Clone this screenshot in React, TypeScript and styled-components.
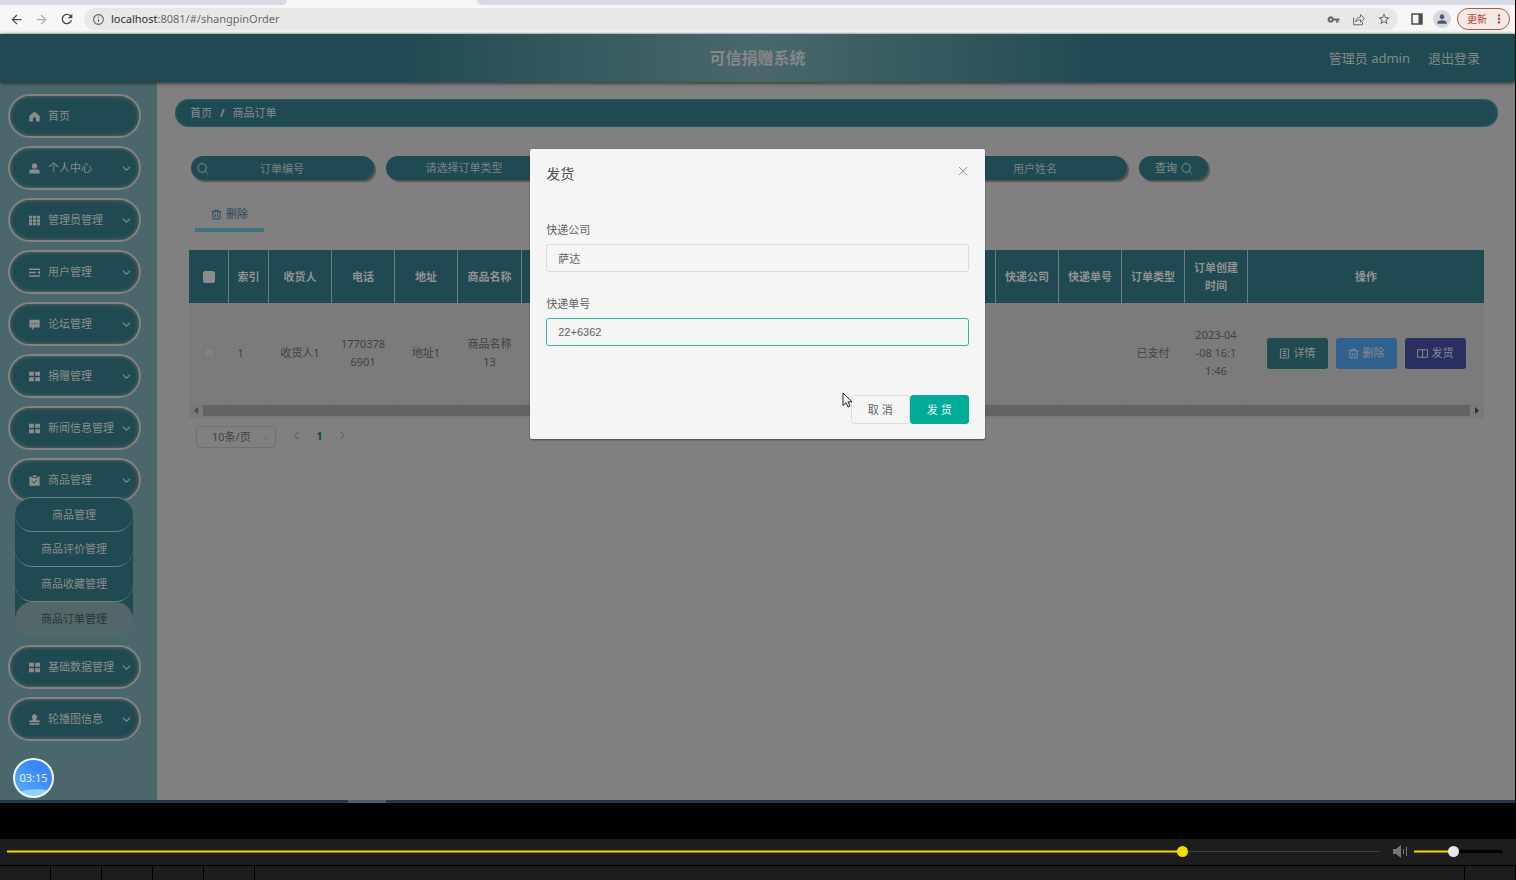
import React, { useState } from 'react';
import styled, { createGlobalStyle, css } from 'styled-components';
import {
  MdArrowBack,
  MdArrowForward,
  MdRefresh,
  MdInfoOutline,
  MdVpnKey,
  MdStarBorder,
  MdPerson,
  MdMoreVert,
} from 'react-icons/md';

const teal = '#1f4a51';
const tealSoft = '#4a686b';
const ink = '#8c8c8c';
const page = '#808080';
const uiFont = '"Noto Sans", "Noto Sans CJK SC", sans-serif';
const formFont = '"Liberation Sans", "Noto Sans CJK SC", sans-serif';

const GlobalStyle = createGlobalStyle`
  * { box-sizing: border-box; }
  body { margin: 0; background: #000; font: 11px/18px ${uiFont}; color: #404244; }
  button, input, select { font: inherit; color: inherit; margin: 0; }
  button { cursor: pointer; padding: 0; border: 0; background: none; }
  a { color: inherit; text-decoration: none; }
  ul { list-style: none; margin: 0; padding: 0; }
  svg { display: block; flex: none; }
`;

const Player = styled.div`
  display: flex;
  flex-direction: column;
  min-height: 100vh;
`;

const Screen = styled.div`
  position: relative;
  flex: 1;
  display: flex;
  flex-direction: column;
  margin-right: 1px;
  background: ${page};
`;

/* Browser chrome */

const TabStrip = styled.div`
  display: flex;
  height: 5px;
  background: #f7f7f7;
`;

const TabEdge = styled.div<{ $side: 'left' | 'right' }>`
  background: #d8dae1;
  ${(p) =>
    p.$side === 'left'
      ? css`width: 287px; border-bottom-right-radius: 5px;`
      : css`flex: 1; margin-left: 190px; border-bottom-left-radius: 5px;`}
`;

const BrowserBar = styled.div`
  display: flex;
  align-items: center;
  height: 29px;
  padding: 0 5px 0 9px;
  background: #f7f7f7;
  border-bottom: 1px solid #e6eaea;
  color: #4b4d50;
`;

const NavButton = styled.button<{ $faded?: boolean }>`
  width: 25px;
  height: 22px;
  color: ${(p) => (p.$faded ? '#b0b0b0' : '#4b4d50')};
`;

const Omnibox = styled.div`
  flex: 1;
  display: flex;
  align-items: center;
  height: 22px;
  padding: 0 8px;
  border-radius: 11px;
  background: #e8e8e8;
  color: #66686b;
`;

const Url = styled.span`
  flex: 1;
  margin-left: 6px;
  b { font-weight: 400; color: #2c2e30; }
`;

const OmniButton = styled.button`
  width: 13px;
  height: 14px;
  margin-left: 12px;
  display: grid;
  place-items: center;
`;

const Avatar = styled.button`
  display: grid;
  place-items: center;
  width: 18px;
  height: 18px;
  margin: 0 6px 0 10px;
  border-radius: 9px;
  background: #d5d7dc;
  color: #4a5a74;
`;

const UpdateButton = styled.button`
  display: flex;
  align-items: center;
  justify-content: space-between;
  width: 53px;
  height: 22px;
  padding: 0 3px 0 9px;
  border: 1px solid #c0563f;
  border-radius: 11px;
  background: #f3e9e6;
  color: #c03a28;
  font-size: 10px;
`;

/* Application shell */

const Header = styled.header`
  position: relative;
  z-index: 1;
  display: grid;
  grid-template-columns: 1fr auto 1fr;
  align-items: center;
  height: 48px;
  padding: 0 35px;
  color: #868888;
  font-size: 13px;
  background: linear-gradient(90deg, ${teal} 26%, ${tealSoft} 50%, ${teal} 73%);
  box-shadow: 0 1px 4px #222;
`;

const AppTitle = styled.h1`
  grid-column: 2;
  margin: 0;
  font-size: 16px;
  line-height: 24px;
`;

const Account = styled.div`
  display: flex;
  justify-content: flex-end;
  gap: 18px;
`;

const Body = styled.div`
  flex: 1;
  display: flex;
`;

const Sidebar = styled.nav`
  width: 157px;
  padding: 12px 16px 58px 8px;
  background: ${tealSoft};
`;

const MenuList = styled.ul`
  display: flex;
  flex-direction: column;
  gap: 8px;
`;

const MenuButton = styled.button`
  display: flex;
  align-items: center;
  width: 100%;
  height: 44px;
  padding: 0 8px 0 19px;
  border: 2px solid #858282;
  border-radius: 22px;
  background: ${teal};
  box-shadow: inset 0 0 4px #6a6a6a;
  color: ${ink};
`;

const MenuLabel = styled.span`
  flex: 1;
  margin-left: 8px;
  text-align: left;
  white-space: nowrap;
`;

const SubMenu = styled.ul`
  position: relative;
  margin: -5px 8px 0 7px;
  border-radius: 18px 18px 0 0;
  background: linear-gradient(${teal} 120px, transparent 120px);
`;

const SubLink = styled.a<{ $active?: boolean }>`
  display: block;
  height: 35px;
  line-height: 34px;
  text-align: center;
  border-radius: 18px;
  border-bottom: 1px solid #63868a;
  background: ${teal};
  color: ${ink};
  li:first-child > & { border-top: 1px solid #63868a; }
  ${(p) =>
    p.$active &&
    css`
      background: #536769;
      border-bottom-color: #536769;
      color: #2c3435;
    `}
`;

const Content = styled.main`
  flex: 1;
  min-width: 0;
  padding: 17px 17px 0 18px;
`;

const Crumbs = styled.nav`
  display: flex;
  align-items: center;
  gap: 8px;
  height: 28px;
  padding: 0 15px;
  border-radius: 14px;
  background: ${teal};
  box-shadow: inset 0 0 3px #3a757d;
  color: ${ink};
`;

const Panel = styled.div`
  padding: 29px 14px 0;
`;

const SearchRow = styled.form`
  display: flex;
  align-items: center;
  gap: 12px;
  padding-left: 2px;
`;

const pill = css`
  height: 24px;
  border-radius: 12px;
  background: ${teal};
  color: ${ink};
  box-shadow: 2px 2px 1px #555;
`;

const SearchField = styled.label`
  ${pill}
  display: flex;
  align-items: center;
  width: 183px;
  padding: 0 18px 0 6px;
`;

const SearchInput = styled.input`
  flex: 1;
  min-width: 0;
  height: 22px;
  padding: 0;
  border: 0;
  outline: 0;
  background: none;
  text-align: center;
  &::placeholder { color: #7b8384; opacity: 1; }
`;

const TypeSelect = styled.select`
  ${pill}
  width: 156px;
  padding: 0;
  border: 0;
  appearance: none;
  color: #7b8384;
  text-align-last: center;
`;

const QueryButton = styled.button`
  ${pill}
  display: flex;
  align-items: center;
  justify-content: center;
  gap: 4px;
  width: 69px;
`;

const BulkDelete = styled.button`
  display: flex;
  align-items: center;
  gap: 4px;
  height: 28px;
  margin: 24px 0 18px 6px;
  padding: 0 16px 4px;
  border-bottom: 4px solid #44727b;
  color: #27475c;
`;

const Table = styled.table`
  width: 100%;
  table-layout: fixed;
  border-collapse: separate;
  border-spacing: 0;
  text-align: center;
`;

const Th = styled.th<{ $w?: number }>`
  width: ${(p) => (p.$w ? `${p.$w}px` : 'auto')};
  height: 53px;
  padding: 0 8px;
  background: ${teal};
  color: #929292;
  border-right: 1px solid #6a8083;
  &:last-child { border-right: 0; }
`;

const Td = styled.td<{ $narrow?: boolean }>`
  height: 100px;
  padding: 0 ${(p) => (p.$narrow ? 24 : 8)}px 0 8px;
  background: #7b7b7b;
  border-right: 1px solid #777;
  word-break: break-all;
  white-space: pre-line;
  &:last-child { border-right: 0; }
`;

const Check = styled.input<{ $light?: boolean }>`
  display: block;
  appearance: none;
  width: 12px;
  height: 12px;
  margin: 0 auto;
  border: 1px solid ${(p) => (p.$light ? '#8c8c8c' : '#727272')};
  border-radius: 2px;
  background: ${(p) => (p.$light ? '#8c8c8c' : '#7f7f7f')};
`;

const RowActions = styled.div`
  display: flex;
  justify-content: center;
  gap: 8px;
`;

const RowButton = styled.button<{ $bg: string }>`
  display: flex;
  align-items: center;
  justify-content: center;
  gap: 4px;
  width: 61px;
  height: 31px;
  border-radius: 3px;
  background: ${(p) => p.$bg};
  color: ${ink};
`;

const Scrollbar = styled.div`
  display: flex;
  align-items: center;
  height: 15px;
  background: #797979;
`;

const ScrollThumb = styled.div`
  flex: 1;
  height: 11px;
  background: #636363;
`;

const ScrollArrow = styled.button`
  display: grid;
  place-items: center;
  width: 14px;
  height: 14px;
`;

const Pager = styled.div`
  display: flex;
  align-items: center;
  margin: 8px 0 0 7px;
`;

const PageSize = styled.label`
  position: relative;
  display: block;
  margin-right: 9px;
`;

const PageSizeSelect = styled.select`
  appearance: none;
  width: 80px;
  height: 22px;
  padding: 0 14px 0 15px;
  border: 1px solid #717171;
  border-radius: 3px;
  background: none;
`;

const SelectArrow = styled.span`
  position: absolute;
  right: 6px;
  top: 8px;
  color: #606060;
  pointer-events: none;
`;

const PageButton = styled.button<{ $current?: boolean }>`
  display: grid;
  place-items: center;
  width: 23px;
  height: 22px;
  padding-bottom: 3px;
  font-weight: 700;
  color: ${(p) => (p.$current ? '#0c5045' : '#5c5c5c')};
`;

/* Shipping dialog */

const Overlay = styled.div`
  position: absolute;
  inset: 34px 0 3px;
  z-index: 2;
  display: flex;
  justify-content: center;
  align-items: flex-start;
  padding-top: 115px;
`;

const Dialog = styled.form`
  position: relative;
  width: 30%;
  min-width: 320px;
  padding: 16px 16px 15px;
  border-radius: 2px;
  background: #f5f5f5;
  box-shadow: 0 1px 2px rgba(0, 0, 0, 0.4);
  color: #5f6163;
`;

const DialogHead = styled.div`
  display: flex;
  justify-content: space-between;
  align-items: flex-start;
  margin-bottom: 38px;
`;

const DialogTitle = styled.h2`
  margin: 0;
  font-size: 14px;
  font-weight: 400;
  line-height: 18px;
  color: #4c4e50;
`;

const CloseButton = styled.button`
  display: grid;
  place-items: center;
  width: 12px;
  height: 12px;
  color: #858789;
`;

const Field = styled.label`
  display: block;
  margin-bottom: 23px;
  line-height: 17px;
`;

const FieldInput = styled.input<{ $focused?: boolean }>`
  display: block;
  width: 100%;
  height: 28px;
  margin-top: 6px;
  padding: 0 11px;
  border: 1px solid ${(p) => (p.$focused ? '#32b3a6' : '#dcd9dc')};
  border-radius: 3px;
  outline: 0;
  background: #f5f5f5;
  font-family: ${formFont};
`;

const DialogFoot = styled.div`
  display: flex;
  justify-content: flex-end;
  margin-top: 49px;
`;

const DialogButton = styled.button<{ $primary?: boolean }>`
  width: 59px;
  height: 29px;
  border: 1px solid ${(p) => (p.$primary ? '#00ab97' : '#dcdcdc')};
  border-radius: 3px;
  background: ${(p) => (p.$primary ? '#00ab97' : '#f5f5f5')};
  color: ${(p) => (p.$primary ? '#f5f5f5' : '#5f6163')};
`;

const Pointer = styled.svg`
  position: absolute;
  right: 132px;
  bottom: 31px;
`;

/* Recording badge and desktop edge */

const Timer = styled.div`
  position: absolute;
  left: 13px;
  bottom: 5px;
  z-index: 3;
  display: grid;
  place-items: center;
  width: 41px;
  height: 40px;
  border: 2px solid #f4f6fa;
  border-radius: 50%;
  background: radial-gradient(ellipse 22px 7px at 60% 100%, #8fd0ff 90%, transparent),
    linear-gradient(45deg, #58b4ff, #3b86f7 70%);
  color: #e8f2ff;
`;

const Taskbar = styled.div`
  height: 3px;
  padding-left: 348px;
  background: #26374a;
`;

const TaskItem = styled.div`
  width: 38px;
  height: 3px;
  background: #4c5f6d;
`;

/* Video player controls */

const Controls = styled.div`
  display: flex;
  align-items: center;
  height: 26px;
  margin-top: 36px;
  padding: 0 14px 2px 7px;
  background: #1d1d1d;
`;

const Range = styled.input<{ $fill: number; $rail: string; $thumb: string }>`
  appearance: none;
  display: block;
  height: 11px;
  background: none;
  &::-webkit-slider-runnable-track {
    height: 3px;
    background:
      linear-gradient(#8a7d00 1px, #f5e100 1px, #f5e100 2px, #8a7d00 2px) 0 0 / ${(p) => p.$fill}% 3px no-repeat,
      ${(p) => p.$rail};
  }
  &::-webkit-slider-thumb {
    appearance: none;
    width: 11px;
    height: 11px;
    margin-top: -4px;
    border-radius: 50%;
    background: ${(p) => p.$thumb};
  }
`;

const Progress = styled(Range)`
  flex: 1;
  min-width: 0;
`;

const Volume = styled(Range)`
  width: 88px;
`;

const MuteButton = styled.button`
  margin: 0 7px 0 13px;
`;

const Dock = styled.div`
  display: flex;
  gap: 1px;
  height: 15px;
  padding: 1px 1px 0 0;
`;

const DockCell = styled.div<{ $grow?: boolean }>`
  width: 50px;
  background: #1d1d1d;
  ${(p) => p.$grow && css`flex: 1;`}
`;

/* Icons */

type GlyphName =
  | 'home' | 'user' | 'grid' | 'fold' | 'comment' | 'menu' | 'claim' | 'stamp';

const glyphs: Record<GlyphName, React.ReactNode> = {
  home: <path d="M8 .8 15.600 7.200v7a1 1 0 0 1-1 1H10.200v-4.200a2.200 2.200 0 0 0-4.400 0v4.200H1.400a1 1 0 0 1-1-1v-7z" />,
  user: (
    <>
      <circle cx="8" cy="4.500" r="4" />
      <path d="M.5 15.200v-3.200a2.500 2.500 0 0 1 2.500-2.500h10a2.500 2.500 0 0 1 2.500 2.500v3.200z" />
    </>
  ),
  grid: <path d="M0 1h4.600v4H0zM5.700 1h4.600v4H5.700zM11.400 1H16v4h-4.600zM0 6h4.600v4H0zM5.700 6h4.600v4H5.700zM11.400 6H16v4h-4.600zM0 11h4.600v4H0zM5.700 11h4.600v4H5.700zM11.400 11H16v4h-4.600z" />,
  fold: <path d="M0 2h16v2.200H0zM0 7h10v2.200H0zM0 12h16v2.200H0zM16 5.500v5l-4-2.500z" />,
  comment: (
    <path
      fillRule="evenodd"
      d="M1.500 1h13a1 1 0 0 1 1 1v9.500a1 1 0 0 1-1 1H8L4.500 16v-3.500h-3a1 1 0 0 1-1-1V2a1 1 0 0 1 1-1zM3.500 6v1.500h1.500V6zm3.700 0v1.500h1.500V6zm3.700 0v1.500h1.500V6z"
    />
  ),
  menu: <path d="M0 1h7.200v6H0zM9 1h7v6H9zM0 9h7.200v6H0zM9 9h7v6H9z" />,
  claim: (
    <>
      <path d="M.5 2h3.500v2.500h8V2h3.500v13.500H.5zM5.500.5h5v2.800h-5z" />
      <path d="m4.600 9 2.600 2.600 4.600-4.600" fill="none" stroke={teal} strokeWidth="1.400" />
    </>
  ),
  stamp: <path d="M8 .5a3.800 3.800 0 0 1 3.500 5.200c-.8 1.500-1 2.300-.8 3.300h3.800a1 1 0 0 1 1 1v2H.5v-2a1 1 0 0 1 1-1h3.800c.2-1 0-1.800-.8-3.300A3.800 3.800 0 0 1 8 .5zM1 13.500h14v2H1z" />,
};

const Glyph = ({ name }: { name: GlyphName }) => (
  <svg width="11" height="11" viewBox="0 0 16 16" fill="currentColor" aria-hidden="true">
    {glyphs[name]}
  </svg>
);

const outlines = {
  search: 'M7.500 1a6.200 6.200 0 1 1 0 12.400 6.200 6.200 0 0 1 0-12.400zM12 12l3.200 3',
  trash: 'M1 4h14M5.500 4V1.500h5V4M2.800 4v10.500h10.400V4M6.300 7v5M9.700 7v5',
  doc: 'M2 1.500h12v13H2zM5 5h6M5 8h6M5 11h6',
  book: 'M8 2.500v11.500M.8 2.500h14.400v11H.8z',
  close: 'M1.500 1.500l13 13M14.500 1.500l-13 13',
  down: 'M1.500 4.500 8 11l6.500-6.500',
  left: 'M11.500 1.500 5 8l6.500 6.500',
  right: 'M4.500 1.500 11 8l-6.500 6.500',
};

const Outline = ({ name, size = 11, weight = 1.4 }: { name: keyof typeof outlines; size?: number; weight?: number }) => (
  <svg width={size} height={size} viewBox="0 0 16 16" fill="none" stroke="currentColor" strokeWidth={weight} aria-hidden="true">
    <path d={outlines[name]} />
  </svg>
);

/* Data */

const menu: { icon: GlyphName; label: string; leaf?: boolean }[] = [
  { icon: 'home', label: '首页', leaf: true },
  { icon: 'user', label: '个人中心' },
  { icon: 'grid', label: '管理员管理' },
  { icon: 'fold', label: '用户管理' },
  { icon: 'comment', label: '论坛管理' },
  { icon: 'menu', label: '捐赠管理' },
  { icon: 'menu', label: '新闻信息管理' },
  { icon: 'claim', label: '商品管理' },
  { icon: 'menu', label: '基础数据管理' },
  { icon: 'stamp', label: '轮播图信息' },
];

const goodsMenu = ['商品管理', '商品评价管理', '商品收藏管理', '商品订单管理'];

const columns: { title: string; width?: number; value: string }[] = [
  { title: '索引', width: 40, value: '1' },
  { title: '收货人', width: 63, value: '收货人1' },
  { title: '电话', width: 63, value: '17703786901' },
  { title: '地址', width: 63, value: '地址1' },
  { title: '商品名称', width: 64, value: '商品名称13' },
  { title: '', value: '' },
  { title: '快递公司', width: 63, value: '' },
  { title: '快递单号', width: 63, value: '' },
  { title: '订单类型', width: 63, value: '已支付' },
  { title: '订单创建时间', width: 63, value: '2023-04\n-08 16:1\n1:46' },
];

export default function App() {
  const [company, setCompany] = useState('萨达');
  const [tracking, setTracking] = useState('22+6362');
  const [position, setPosition] = useState(859);
  const [volume, setVolume] = useState(44);

  return (
    <Player>
      <GlobalStyle />
      <Screen>
        <TabStrip>
          <TabEdge $side="left" />
          <TabEdge $side="right" />
        </TabStrip>
        <BrowserBar>
          <NavButton aria-label="后退"><MdArrowBack size={15} /></NavButton>
          <NavButton aria-label="前进" $faded><MdArrowForward size={15} /></NavButton>
          <NavButton aria-label="刷新"><MdRefresh size={16} /></NavButton>
          <Omnibox>
            <MdInfoOutline size={13} />
            <Url><b>localhost</b>:8081/#/shangpinOrder</Url>
            <OmniButton aria-label="密码"><MdVpnKey size={13} /></OmniButton>
            <OmniButton aria-label="分享">
              <svg width="13" height="13" viewBox="0 0 16 16" fill="none" stroke="currentColor" strokeWidth="1.200">
                <path d="M2 5.500v9h11v-3.500M4.500 11c.3-4 2.500-6 6-6V2l4.800 4.700-4.800 4.500V8.400C8 8.400 6 9 4.500 11z" />
              </svg>
            </OmniButton>
            <OmniButton aria-label="收藏"><MdStarBorder size={14} /></OmniButton>
          </Omnibox>
          <OmniButton aria-label="侧边栏">
            <svg width="12" height="12" viewBox="0 0 12 12">
              <path d="M1 1h10v10H1z" fill="none" stroke="currentColor" strokeWidth="1.500" />
              <path d="M7.500 1H11v10H7.500z" fill="currentColor" />
            </svg>
          </OmniButton>
          <Avatar aria-label="用户"><MdPerson size={14} /></Avatar>
          <UpdateButton>更新<MdMoreVert size={14} /></UpdateButton>
        </BrowserBar>

        <Header>
          <AppTitle>可信捐赠系统</AppTitle>
          <Account>
            <span>管理员 admin</span>
            <a href="#logout">退出登录</a>
          </Account>
        </Header>

        <Body>
          <Sidebar>
            <MenuList>
              {menu.map((item) => (
                <li key={item.label}>
                  <MenuButton>
                    <Glyph name={item.icon} />
                    <MenuLabel>{item.label}</MenuLabel>
                    {!item.leaf && <Outline name="down" size={9} weight={1.8} />}
                  </MenuButton>
                  {item.icon === 'claim' && (
                    <SubMenu>
                      {goodsMenu.map((label, i) => (
                        <li key={label}>
                          <SubLink href="#/shangpinOrder" $active={i === 3}>{label}</SubLink>
                        </li>
                      ))}
                    </SubMenu>
                  )}
                </li>
              ))}
            </MenuList>
          </Sidebar>

          <Content>
            <Crumbs>
              <a href="#/">首页</a>
              <b>/</b>
              <span>商品订单</span>
            </Crumbs>
            <Panel>
              <SearchRow onSubmit={(e) => e.preventDefault()}>
                <SearchField>
                  <Outline name="search" />
                  <SearchInput placeholder="订单编号" aria-label="订单编号" />
                </SearchField>
                <TypeSelect aria-label="订单类型">
                  <option>请选择订单类型</option>
                </TypeSelect>
                <SearchField><SearchInput aria-label="商品名称" /></SearchField>
                <SearchField><SearchInput aria-label="收货人" /></SearchField>
                <SearchField>
                  <Outline name="search" />
                  <SearchInput placeholder="用户姓名" aria-label="用户姓名" />
                </SearchField>
                <QueryButton>查询<Outline name="search" /></QueryButton>
              </SearchRow>

              <BulkDelete><Outline name="trash" />删除</BulkDelete>

              <Table>
                <thead>
                  <tr>
                    <Th $w={40}><Check type="checkbox" $light aria-label="全选" /></Th>
                    {columns.map((c, i) => <Th key={i} $w={c.width}>{c.title}</Th>)}
                    <Th $w={236}>操作</Th>
                  </tr>
                </thead>
                <tbody>
                  <tr>
                    <Td><Check type="checkbox" aria-label="选择订单" /></Td>
                    {columns.map((c, i) => <Td key={i} $narrow={i === 0}>{c.value}</Td>)}
                    <Td>
                      <RowActions>
                        <RowButton $bg="#204b50"><Outline name="doc" />详情</RowButton>
                        <RowButton $bg="#30608d"><Outline name="trash" />删除</RowButton>
                        <RowButton $bg="#292f60"><Outline name="book" />发货</RowButton>
                      </RowActions>
                    </Td>
                  </tr>
                </tbody>
              </Table>
              <Scrollbar>
                <ScrollArrow aria-label="向左滚动">
                  <svg width="4" height="7" viewBox="0 0 4 7"><path d="M4 0v7L0 3.500z" fill="#4a4a4a" /></svg>
                </ScrollArrow>
                <ScrollThumb />
                <ScrollArrow aria-label="向右滚动">
                  <svg width="4" height="7" viewBox="0 0 4 7"><path d="M0 0v7l4-3.500z" fill="#2c2c2c" /></svg>
                </ScrollArrow>
              </Scrollbar>

              <Pager>
                <PageSize>
                  <PageSizeSelect aria-label="每页条数">
                    <option>10条/页</option>
                  </PageSizeSelect>
                  <SelectArrow><Outline name="down" size={8} /></SelectArrow>
                </PageSize>
                <PageButton aria-label="上一页"><Outline name="left" size={9} weight={1.8} /></PageButton>
                <PageButton $current>1</PageButton>
                <PageButton aria-label="下一页"><Outline name="right" size={9} weight={1.8} /></PageButton>
              </Pager>
            </Panel>
          </Content>
        </Body>

        <Taskbar><TaskItem /></Taskbar>

        <Overlay>
          <Dialog onSubmit={(e) => e.preventDefault()}>
            <DialogHead>
              <DialogTitle>发货</DialogTitle>
              <CloseButton type="button" aria-label="关闭"><Outline name="close" size={10} /></CloseButton>
            </DialogHead>
            <Field>
              快递公司
              <FieldInput value={company} onChange={(e) => setCompany(e.target.value)} />
            </Field>
            <Field>
              快递单号
              <FieldInput $focused value={tracking} onChange={(e) => setTracking(e.target.value)} />
            </Field>
            <DialogFoot>
              <DialogButton type="button">取 消</DialogButton>
              <DialogButton $primary>发 货</DialogButton>
            </DialogFoot>
            <Pointer width="11" height="16" viewBox="0 0 11 16" aria-hidden="true">
              <path d="M1 1v12.500l3-2.800 2 4.300 2-.9-2-4.200h4z" fill="#f8f8f8" stroke="#222" />
            </Pointer>
          </Dialog>
        </Overlay>

        <Timer>03:15</Timer>
      </Screen>

      <Controls>
        <Progress
          type="range" min="0" max="1000" aria-label="播放进度"
          value={position} onChange={(e) => setPosition(Number(e.target.value))}
          $fill={position / 10} $rail="linear-gradient(#3c3c3c, #3c3c3c) 0 1px / 100% 1px no-repeat" $thumb="#f5dc00"
        />
        <MuteButton aria-label="静音">
          <svg width="14" height="13" viewBox="0 0 14 13">
            <path d="M0 4h3l5-4v13L3 9H0z" fill="#777" />
            <path d="M10.500 4v5M13.500 2v9" stroke="#777" fill="none" />
          </svg>
        </MuteButton>
        <Volume
          type="range" min="0" max="100" aria-label="音量"
          value={volume} onChange={(e) => setVolume(Number(e.target.value))}
          $fill={volume} $rail="#000" $thumb="#e8e8e8"
        />
      </Controls>
      <Dock>
        <DockCell /><DockCell /><DockCell /><DockCell /><DockCell />
        <DockCell $grow />
        <DockCell />
      </Dock>
    </Player>
  );
}
